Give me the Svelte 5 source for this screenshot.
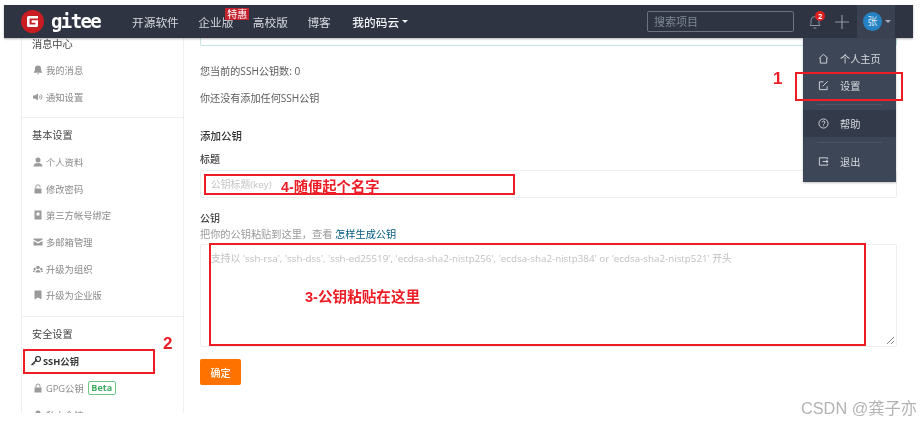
<script>
  const groups = [
    { title: '基本设置', items: [['个人资料','user'],['修改密码','lock-open'],['第三方帐号绑定','book'],['多邮箱管理','mail'],['升级为组织','group'],['升级为企业版','flag']] }
  ];
</script>

<div class="page">
  <header class="nav">
    <div class="logo">
      <svg width="23" height="23" viewBox="0 0 23 23"><circle cx="11.5" cy="11.5" r="11.5" fill="#c71d23"/><path d="M6 7.5a1.5 1.5 0 0 1 1.5-1.5H17v2.600H8.600v5.800h5.800v-1.600H10.600V10.300H17v5.200a1.500 1.500 0 0 1-1.500 1.500H7.500A1.500 1.500 0 0 1 6 15.500z" fill="#fff"/></svg>
      <span class="brand">gitee</span>
    </div>
    <nav class="links">
      <span>开源软件</span>
      <span class="ent">企业版<em>特惠</em></span>
      <span>高校版</span>
      <span>博客</span>
      <span class="mine">我的码云<i class="caret"></i></span>
    </nav>
    <div class="search">搜索项目</div>
    <div class="bell">
      <svg width="14" height="16" viewBox="0 0 14 16" fill="none" stroke="#8b94a3" stroke-width="1"><path d="M2 11.500c1-1 1-2.500 1-5a4 4 0 0 1 8 0c0 2.500 0 4 1 5zM5.500 14h3"/></svg>
      <b>2</b>
    </div>
    <svg class="plus" width="14" height="14" viewBox="0 0 14 14" stroke="#8b94a3" stroke-width="1.200"><path d="M7 0v14M0 7h14"/></svg>
    <div class="user"><span class="avatar">张</span><i class="caret"></i></div>
  </header>

  <div class="body">
    <aside class="side">
      <div class="group first">
        <h4>消息中心</h4>
        <div class="row"><svg class="ic" viewBox="0 0 10 10"><path d="M5 .5a3 3 0 0 1 3 3c0 2 .5 3 1.200 3.700v.5H.8v-.5C1.500 6.500 2 5.500 2 3.500a3 3 0 0 1 3-3zM4 8.500h2a1 1 0 0 1-2 0z"/></svg>我的消息</div>
        <div class="row"><svg class="ic" viewBox="0 0 10 10"><path d="M0 3.500h2L5 1.500v7l-3-2H0z"/><path d="M6.300 3.500a2 2 0 0 1 0 3M7.800 2.300a4 4 0 0 1 0 5.400" fill="none" stroke="#9a9a9a"/></svg>通知设置</div>
      </div>
      {#each groups as g}
        <div class="group">
          <h4>{g.title}</h4>
          {#each g.items as [label, icon]}
            <div class="row">
              <svg class="ic" viewBox="0 0 10 10">
                {#if icon === 'user'}<circle cx="5" cy="3" r="2.500"/><path d="M.5 9.500c0-2.500 2-3.500 4.500-3.500s4.500 1 4.500 3.500z"/>
                {:else if icon === 'lock-open'}<path d="M1.500 4.500h7v5h-7z"/><path d="M2.800 4.500V3a2.200 2.200 0 0 1 4.400 0" fill="none" stroke="#9a9a9a"/>
                {:else if icon === 'book'}<path d="M1.500.5h7v9h-7zM3.500 2.500v3h3v-3z" fill-rule="evenodd"/>
                {:else if icon === 'mail'}<path d="M.5 1.500h9v1L5 5 .5 2.500zM.5 4l4.500 2.500L9.500 4v4.500h-9z"/>
                {:else if icon === 'group'}<circle cx="5" cy="3.500" r="1.800"/><circle cx="1.700" cy="5" r="1.200"/><circle cx="8.300" cy="5" r="1.200"/><path d="M2.500 8.500c0-1.500 1-2.500 2.500-2.500s2.500 1 2.500 2.500zM0 8c0-1 .6-1.700 1.600-1.700l.4.200L1.500 8zM10 8c0-1-.6-1.700-1.600-1.700L8 6.500 8.500 8z"/>
                {:else}<path d="M1.500.5h7v9L5 7.500l-3.500 2z"/>{/if}
              </svg>{label}
            </div>
          {/each}
        </div>
      {/each}
      <div class="group">
        <h4>安全设置</h4>
        <div class="row active"><svg class="key" viewBox="0 0 10 10"><circle cx="7" cy="3" r="2.500"/><path d="M6 3.500L.5 9M1.500 8l1 1M3 6.500l1 1" stroke="#333" fill="none" stroke-width="1.200"/></svg>SSH公钥</div>
        <div class="row"><svg class="ic" viewBox="0 0 10 10"><path d="M1.500 4.500h7v5h-7z"/><path d="M3 4.500V3a2 2 0 0 1 4 0v1.500" fill="none" stroke="#9a9a9a"/></svg>GPG公钥<span class="beta">Beta</span></div>
        <div class="row"><svg class="ic" viewBox="0 0 10 10"><circle cx="5" cy="3" r="2.500"/></svg>私人令牌</div>
      </div>
    </aside>

    <main class="main">
      <div class="alert"></div>
      <p class="count">您当前的SSH公钥数: 0</p>
      <p class="none">你还没有添加任何SSH公钥</p>
      <h3>添加公钥</h3>
      <div class="lbl">标题</div>
      <div class="input">公钥标题(key)</div>
      <div class="lbl second">公钥</div>
      <p class="hint">把你的公钥粘贴到这里，查看 <a href="#top">怎样生成公钥</a></p>
      <div class="area">
        支持以 'ssh-rsa', 'ssh-dss', 'ssh-ed25519', 'ecdsa-sha2-nistp256', 'ecdsa-sha2-nistp384' or 'ecdsa-sha2-nistp521' 开头
        <svg class="grip" width="9" height="9" viewBox="0 0 9 9" stroke="#888" fill="none"><path d="M1 8l7-7M5 8l3-3"/></svg>
      </div>
      <button class="ok">确定</button>
    </main>
  </div>

  <div class="menu">
    <div class="mi"><svg viewBox="0 0 12 12"><path d="M1 6l5-4.500L11 6M2.500 5.500V11h7V5.500"/></svg>个人主页</div>
    <div class="mi"><svg viewBox="0 0 12 12"><path d="M10 7v3.500H1.500V2H6M5 7l5.500-5.500"/></svg>设置</div>
    <hr />
    <div class="mi hover"><svg viewBox="0 0 12 12"><circle cx="6" cy="6" r="5"/><path d="M4.500 4.800a1.500 1.500 0 1 1 2 1.400c-.4.200-.5.500-.5 1M6 8.300v.8"/></svg>帮助</div>
    <hr />
    <div class="mi"><svg viewBox="0 0 12 12"><path d="M10.500 3.500V2h-9v8h9V8.500M5 6h6M9 4.500L11 6 9 7.500"/></svg>退出</div>
  </div>

  <div class="mark b1"></div><span class="num n1">1</span>
  <div class="mark b2"></div><span class="num n2">2</span>
  <div class="mark b3"></div><span class="note t3">3-公钥粘贴在这里</span>
  <div class="mark b4"></div><span class="note t4">4-随便起个名字</span>
  <span class="wm">CSDN @龚子亦</span>
</div>

<style>
  :global(body) { margin: 0; background: #fff; overflow: hidden; }
  .page {
    position: relative; width: 923px; height: 423px; overflow: hidden; box-sizing: border-box;
    padding: 5px 0 0 4px;
    font-family: "Open Sans", "Noto Sans CJK SC", sans-serif; font-size: 10px; color: #5c5c5c;
    filter: blur(0.4px);
  }
  .nav {
    position: relative; z-index: 2; display: flex; align-items: center; width: 909px; height: 33px;
    background: #2e3442; box-shadow: 0 1px 2px rgba(0,0,0,.3); color: #d5d8de;
  }
  .logo { display: flex; align-items: center; margin-left: 17px; width: 111px; }
  .brand { margin-left: 7px; font: 700 19px/1 "DejaVu Sans Mono", monospace; color: #fff; letter-spacing: -1.600px; }
  .links { display: flex; gap: 19.500px; font-size: 11.700px; }
  .ent { position: relative; }
  .ent em {
    position: absolute; left: 27px; top: -5px; width: 24px; height: 12px; background: #c4212f; color: #fff;
    font-style: normal; font-size: 10px; line-height: 12px; text-align: center;
  }
  .mine { color: #f1f2f4; display: flex; align-items: center; font-weight: 500; margin-left: 2px; }
  .caret { display: inline-block; margin-left: 3px; border: 3px solid transparent; border-top: 3px solid currentColor; border-bottom: 0; }
  .search {
    box-sizing: border-box; margin-left: 239px; width: 147px; height: 21px; border: 1px solid #6b7280; border-radius: 2px;
    padding-left: 6px; line-height: 19px; font-size: 11px; color: #7f8794;
  }
  .bell { position: relative; margin-left: 14px; width: 14px; height: 16px; }
  .bell b {
    position: absolute; left: 7px; top: -3px; width: 10px; height: 10px; border-radius: 50%; background: #e02020; color: #fff;
    font-size: 7.500px; line-height: 10px; text-align: center;
  }
  .plus { margin-left: 13px; }
  .user { display: flex; align-items: center; box-sizing: border-box; margin-left: 8px; width: 38px; height: 33px; background: #3a4252; padding-left: 6px; color: #aab; }
  .avatar { width: 19px; height: 19px; border-radius: 50%; background: #2583c4; color: #dfeaf3; font-size: 10px; line-height: 19px; text-align: center; }

  .body { display: flex; height: 385px; }
  .side {
    box-sizing: border-box; margin-left: 17px; width: 163px; height: 375px; overflow: hidden;
    border: 1px solid #eef0f0; border-width: 0 1px; padding: 0 10px; flex: none;
  }
  .group { border-bottom: 1px solid #eef0f0; margin: 0 -10px; padding: 9px 10px 8px; }
  .group.first { padding-top: 0; padding-bottom: 7px; }
  .group h4 { margin: 0 0 5.700px; font-size: 10.200px; font-weight: 400; color: #444; line-height: 16px; }
  .group.first h4 { margin-bottom: 7px; line-height: 12px; }
  .row { display: flex; align-items: center; height: 26.600px; font-size: 9.300px; color: #8a8a8a; white-space: nowrap; }
  .ic { width: 10px; height: 10px; fill: #9a9a9a; margin: 0 3px 0 1px; flex: none; }
  .row.active { color: #333; font-weight: 700; }
  .key { width: 10px; height: 10px; margin: 0 2px 0 -1px; fill: none; stroke: #333; stroke-width: 1.200; }
  .beta { margin-left: 4px; box-sizing: border-box; width: 28px; height: 14px; border: 1px solid #6cc784; border-radius: 2px; color: #3fae60; font-size: 9px; font-weight: 700; line-height: 12px; text-align: center; }

  .main { flex: 1; box-sizing: border-box; padding: 0 26px 0 16px; }
  .main p { margin: 0; font-size: 10.100px; }
  .alert { height: 7px; border: 1px solid #c5e4e6; border-top: 0; border-radius: 0 0 2px 2px; }
  .main .count { margin-top: 16px; line-height: 18px; }
  .main .none { margin-top: 9px; line-height: 18px; }
  .main h3 { margin: 20px 0 0; font-size: 10.500px; font-weight: 500; color: #333; line-height: 18px; }
  .lbl { margin-top: 7px; font-size: 10px; font-weight: 500; color: #444; line-height: 14px; }
  .lbl.second { margin-top: 13px; }
  .input { box-sizing: border-box; height: 28px; margin-top: 4px; border: 1px solid #eceeef; border-radius: 2px; padding-left: 10px; line-height: 28px; font-size: 9.800px; color: #c4c4c4; }
  .main .hint { color: #9a9a9a; line-height: 14px; margin: 2px 0 3px; font-size: 10.200px; }
  .hint a { color: #005980; text-decoration: none; }
  .area { position: relative; box-sizing: border-box; height: 103px; border: 1px solid #eceeef; border-radius: 2px; padding: 7px 10px; font-size: 9.800px; color: #c0c0c0; line-height: 14px; white-space: nowrap; }
  .grip { position: absolute; right: 1px; bottom: 1px; }
  .ok { display: block; width: 41px; height: 26px; margin-top: 12px; border: 0; border-radius: 2px; background: #fe7300; color: #fff; font: 500 10px "Open Sans", "Noto Sans CJK SC", sans-serif; padding: 0; }

  .menu { position: absolute; z-index: 3; left: 803px; top: 38px; width: 93px; height: 144px; box-sizing: border-box; padding-top: 6.500px; background: #3d4656; box-shadow: 0 1px 2px rgba(0,0,0,.25); color: #d9dce1; }
  .mi { display: flex; align-items: center; height: 27px; padding-left: 15px; font-size: 10.200px; }
  .mi svg { width: 11px; height: 11px; margin-right: 11px; fill: none; stroke: #d9dce1; stroke-width: 1; }
  .mi.hover { background: #333a49; }
  .menu hr { margin: 5px 14px; border: 0; border-top: 1px solid #4c5566; }

  .mark { position: absolute; z-index: 4; box-sizing: border-box; border: 2px solid #ee1c25; }
  .b1 { left: 795px; top: 72px; width: 108px; height: 29px; }
  .b2 { left: 23px; top: 349px; width: 132px; height: 25px; }
  .b3 { left: 209px; top: 243px; width: 657px; height: 103px; }
  .b4 { left: 204px; top: 174px; width: 311px; height: 21px; }
  .num, .note { position: absolute; z-index: 4; color: #ee1c25; font-weight: 700; font-family: "Liberation Sans", "Noto Sans CJK SC", sans-serif; line-height: 1; white-space: nowrap; }
  .num { font-size: 17px; }
  .n1 { left: 773px; top: 70px; }
  .n2 { left: 163px; top: 335px; }
  .note { font-size: 14.600px; }
  .t3 { left: 305px; top: 290px; }
  .t4 { left: 281px; top: 180px; font-size: 14.300px; }
  .wm { position: absolute; z-index: 4; left: 801px; top: 399px; font: 16.300px/18px "Liberation Sans", "Noto Sans CJK SC", sans-serif; color: #b3b3b3; white-space: nowrap; }
</style>
